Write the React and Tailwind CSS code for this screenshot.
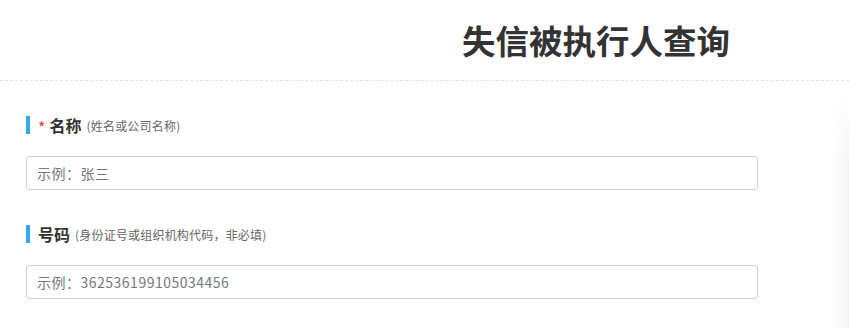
import React from "react";

const Label = ({ required, title, hint }) => (
  <div className="flex items-center h-[18px]">
    <span className="w-[4px] h-[18px] bg-[#35a8ee]" />
    {required && (
      <span className="ml-[8px] text-[16px] leading-none text-[#e4393c] mt-[4px]">*</span>
    )}
    <span className={`${required ? "ml-[4px]" : "ml-[8px]"} text-[16px] leading-none font-bold text-[#333]`}>
      {title}
    </span>
    <span className="ml-[5px] text-[12px] leading-none text-[#666] mt-[2px] tracking-[0.2px]">{hint}</span>
  </div>
);

const Field = ({ placeholder }) => (
  <input
    type="text"
    placeholder={placeholder}
    className="w-[732px] h-[34px] border border-[#d0d0d0] rounded-[3px] px-[10px] text-[14px] tracking-[0.5px] text-[#333] placeholder:text-[#737880] outline-none bg-white"
  />
);

export default function App() {
  return (
    <div
      className="w-full h-[328px] bg-white flex flex-col overflow-hidden"
      style={{ fontFamily: '"Noto Sans CJK SC", "Noto Sans", sans-serif' }}
    >
      {/* header */}
      <div className="h-[81px] border-b border-dashed border-[#e2e2e2] pt-[22px] pl-[462px]">
        <h1 className="text-[33.5px] leading-[36px] font-bold text-[#333] whitespace-nowrap">
          失信被执行人查询
        </h1>
      </div>

      <div className="flex flex-1">
        <div className="flex-1 pl-[26px]">
          <div className="mt-[35px]">
            <Label required title="名称" hint="(姓名或公司名称)" />
            <div className="mt-[22px]">
              <Field placeholder="示例：张三" />
            </div>
          </div>
          <div className="mt-[35px]">
            <Label title="号码" hint="(身份证号或组织机构代码，非必填)" />
            <div className="mt-[22px]">
              <Field placeholder="示例：362536199105034456" />
            </div>
          </div>
        </div>
        {/* soft edge on the right */}
        <div className="w-[18px] mt-[12px] bg-gradient-to-r from-white to-[#f4f5f7] flex flex-col">
          <div className="h-[70px] bg-gradient-to-b from-white to-transparent" />
        </div>
      </div>
    </div>
  );
}
